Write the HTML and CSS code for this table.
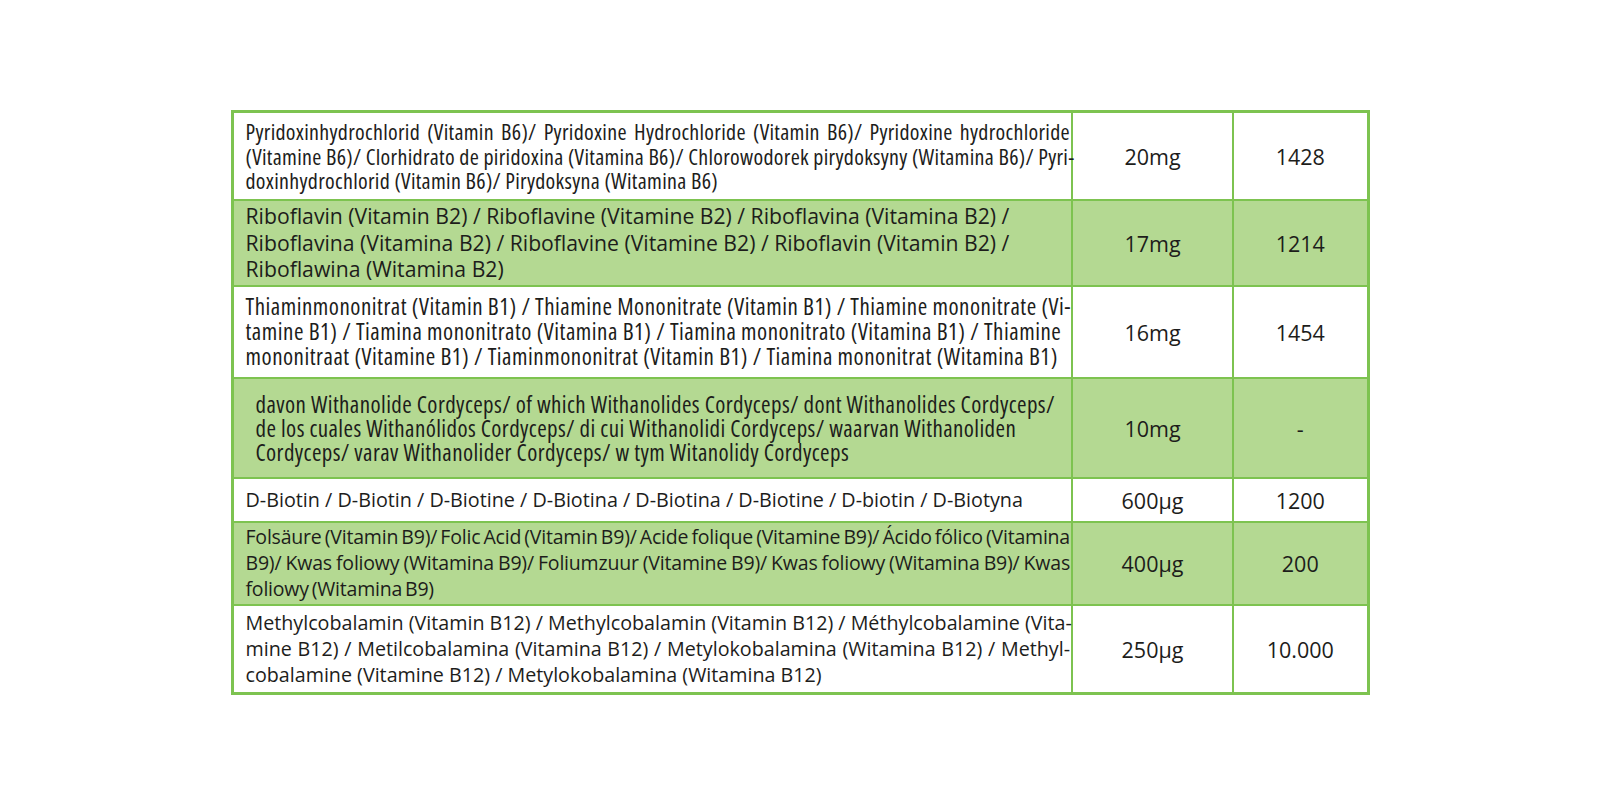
FILE: index.html
```html
<!DOCTYPE html>
<html lang="de">
<head>
<meta charset="utf-8">
<title>Nährwerttabelle</title>
<link rel="stylesheet" href="styles.css">
</head>
<body>
<main class="page">
  <table class="nutri">
    <colgroup>
      <col class="c-name">
      <col class="c-amt">
      <col class="c-nrv">
    </colgroup>
    <tbody>
      <tr class="r1">
        <td class="name s1">
          <span class="ln j">Pyridoxinhydrochlorid (Vitamin B6)/ Pyridoxine Hydrochloride (Vitamin B6)/ Pyridoxine hydrochloride</span>
          <span class="ln j">(Vitamine B6)/ Clorhidrato de piridoxina (Vitamina B6)/ Chlorowodorek pirydoksyny (Witamina B6)/ Pyri-</span>
          <span class="ln">doxinhydrochlorid (Vitamin B6)/ Pirydoksyna (Witamina B6)</span>
        </td>
        <td class="num">20mg</td>
        <td class="num">1428</td>
      </tr>
      <tr class="r2 green">
        <td class="name s2">
          <span class="ln">Riboflavin (Vitamin B2) / Riboflavine (Vitamine B2) / Riboflavina (Vitamina B2) /</span>
          <span class="ln">Riboflavina (Vitamina B2) / Riboflavine (Vitamine B2) / Riboflavin (Vitamin B2) /</span>
          <span class="ln">Riboflawina (Witamina B2)</span>
        </td>
        <td class="num">17mg</td>
        <td class="num">1214</td>
      </tr>
      <tr class="r3">
        <td class="name s3">
          <span class="ln">Thiaminmononitrat (Vitamin B1) / Thiamine Mononitrate (Vitamin B1) / Thiamine mononitrate (Vi-</span>
          <span class="ln">tamine B1) / Tiamina mononitrato (Vitamina B1) / Tiamina mononitrato (Vitamina B1) / Thiamine</span>
          <span class="ln">mononitraat (Vitamine B1) / Tiaminmononitrat (Vitamin B1) / Tiamina mononitrat (Witamina B1)</span>
        </td>
        <td class="num">16mg</td>
        <td class="num">1454</td>
      </tr>
      <tr class="r4 green">
        <td class="name s4 indent">
          <span class="ln">davon Withanolide Cordyceps/ of which Withanolides Cordyceps/ dont Withanolides Cordyceps/</span>
          <span class="ln">de los cuales Withanólidos Cordyceps/ di cui Withanolidi Cordyceps/ waarvan Withanoliden</span>
          <span class="ln">Cordyceps/ varav Withanolider Cordyceps/ w tym Witanolidy Cordyceps</span>
        </td>
        <td class="num">10mg</td>
        <td class="num">-</td>
      </tr>
      <tr class="r5">
        <td class="name s5">
          <span class="ln">D-Biotin / D-Biotin / D-Biotine / D-Biotina / D-Biotina / D-Biotine / D-biotin / D-Biotyna</span>
        </td>
        <td class="num">600µg</td>
        <td class="num">1200</td>
      </tr>
      <tr class="r6 green">
        <td class="name s6">
          <span class="ln j">Folsäure (Vitamin B9)/ Folic Acid (Vitamin B9)/ Acide folique (Vitamine B9)/ Ácido fólico (Vitamina</span>
          <span class="ln j">B9)/ Kwas foliowy (Witamina B9)/ Foliumzuur (Vitamine B9)/ Kwas foliowy (Witamina B9)/ Kwas</span>
          <span class="ln">foliowy (Witamina B9)</span>
        </td>
        <td class="num">400µg</td>
        <td class="num">200</td>
      </tr>
      <tr class="r7">
        <td class="name s7">
          <span class="ln j">Methylcobalamin (Vitamin B12) / Methylcobalamin (Vitamin B12) / Méthylcobalamine (Vita-</span>
          <span class="ln j">mine B12) / Metilcobalamina (Vitamina B12) / Metylokobalamina (Witamina B12) / Methyl-</span>
          <span class="ln">cobalamine (Vitamine B12) / Metylokobalamina (Witamina B12)</span>
        </td>
        <td class="num">250µg</td>
        <td class="num">10.000</td>
      </tr>
    </tbody>
  </table>
</main>
</body>
</html>
```
FILE: styles.css
```css
html, body {
  margin: 0;
  padding: 0;
  background: #ffffff;
}

.page {
  padding-top: 110px;
}

.nutri {
  border-collapse: collapse;
  table-layout: fixed;
  width: 1136px;
  margin: 0 auto;
  border: 3px solid #7dc350;
  color: #1d1d1b;
  font-family: "Open Sans", "Liberation Sans", Arial, sans-serif;
}

.c-name { width: 840px; }
.c-amt { width: 161px; }
.c-nrv { width: 135px; }

.nutri td {
  border: 2px solid #7dc350;
  padding: 0;
  vertical-align: middle;
}

.green td {
  background: #b4d992;
}

.r1 { height: 88px; }
.r2 { height: 86px; }
.r3 { height: 92px; }
.r4 { height: 100px; }
.r5 { height: 44px; }
.r6 { height: 83px; }
.r7 { height: 89px; }

.nutri td.name {
  padding: 0 1px 0 12px;
  text-align: left;
}

.nutri td.indent {
  padding-left: 22px;
}

.ln {
  display: block;
  white-space: nowrap;
}

.ln.j {
  text-align: justify;
  text-align-last: justify;
}

/* condensed rows */
.s1 { font-size: 22px; line-height: 24.5px; font-stretch: 75%; letter-spacing: 0.3px; }
.s3 { font-size: 23px; line-height: 25px; font-stretch: 75%; letter-spacing: 0.5px; }
.s4 { font-size: 23px; line-height: 24px; font-stretch: 75%; letter-spacing: 0.4px; }

/* wider rows */
.nutri td.s2 { font-size: 21.2px; line-height: 26.5px; padding-top: 1px; }
.s5 { font-size: 19.75px; line-height: 26px; }
.s6 { font-size: 19.5px; line-height: 26px; letter-spacing: -0.2px; word-spacing: -2px; }
.s7 { font-size: 19.7px; line-height: 26px; }

.nutri td.num {
  text-align: center;
  font-size: 21.5px;
  line-height: 26px;
  padding-top: 2px;
}
```
